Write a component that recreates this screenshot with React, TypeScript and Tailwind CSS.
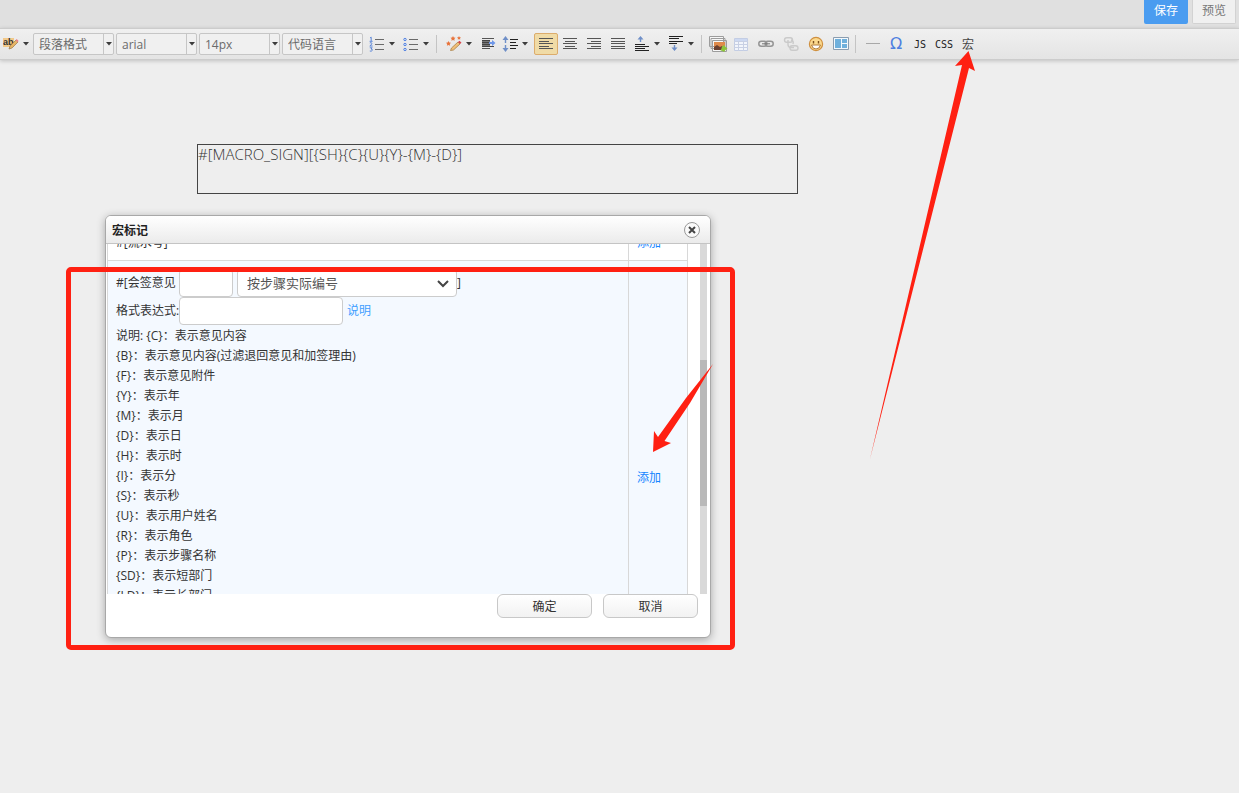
import { ReactNode, useLayoutEffect, useRef } from "react";

const BLOCK_SELECTS = [
  ["Paragraph format", "段落格式"],
  ["Font family", "arial"],
  ["Font size", "14px"],
  ["Code language", "代码语言"],
];

const MACRO_HELP = [
  "说明: {C}：表示意见内容",
  "{B}：表示意见内容(过滤退回意见和加签理由)",
  "{F}：表示意见附件",
  "{Y}：表示年",
  "{M}：表示月",
  "{D}：表示日",
  "{H}：表示时",
  "{I}：表示分",
  "{S}：表示秒",
  "{U}：表示用户姓名",
  "{R}：表示角色",
  "{P}：表示步骤名称",
  "{SD}：表示短部门",
  "{LD}：表示长部门",
];

function Lines({ d, color = "#555" }: { d: string; color?: string }) {
  return <path d={d} stroke={color} strokeWidth="1" fill="none" />;
}

function Icon({ children }: { children: ReactNode }) {
  return (
    <svg width="16" height="16" viewBox="0 0 16 16" className="shrink-0" aria-hidden="true">
      {children}
    </svg>
  );
}

function Caret() {
  return (
    <svg width="6" height="4" viewBox="0 0 6 4" aria-hidden="true">
      <path d="M0 0h6L3 3.6z" fill="#3c3c3c" />
    </svg>
  );
}

function Tool({ label, width = "w-6", active = false, children }: { label: string; width?: string; active?: boolean; children: ReactNode }) {
  return (
    <button
      title={label}
      aria-label={label}
      className={`flex h-[22px] shrink-0 items-center justify-center ${width} ${active ? "rounded-xs border border-[#dcac6c] bg-[#f0dba6]" : ""}`}
    >
      {children}
    </button>
  );
}

function SplitTool({ label, children }: { label: string; children: ReactNode }) {
  return (
    <button title={label} aria-label={label} className="flex h-[22px] w-[34px] shrink-0 items-center gap-1 pl-[3px]">
      {children}
      <Caret />
    </button>
  );
}

function Separator() {
  return <span className="mr-1.5 ml-0.5 h-[18px] w-px shrink-0 bg-[#c4c4c4]" />;
}

function ToolSelect({ label, value }: { label: string; value: string }) {
  return (
    <div className="flex h-[22px] w-[81px] shrink-0 rounded-xs border border-[#c6c6c6] bg-[#f0f0f0]">
      <select aria-label={label} className="min-w-0 flex-1 appearance-none pt-0.5 pl-[5px] text-xs text-[#6b6b6b] outline-none">
        <option>{value}</option>
      </select>
      <span className="flex w-2.5 items-center justify-center border-l border-[#c6c6c6]">
        <Caret />
      </span>
    </div>
  );
}

function Toolbar() {
  return (
    <div className="flex h-8 items-center overflow-hidden border-y border-[#cccccc] bg-linear-to-b from-[#f0f0f0] to-[#e4e4e4] shadow-[0_1px_4px_rgba(0,0,0,0.2)]">
      <SplitTool label="Format painter">
        <Icon>
          <path d="M0 2h11v9H0z" fill="#f2c98a" />
          <text x="0" y="9" fontSize="9" fontWeight="bold" fontFamily="Liberation Sans, sans-serif" fill="#333">ab</text>
          <path d="M6 13l1-3 6-6 2 2-6 6z" fill="#e6b566" stroke="#9a7748" strokeWidth=".7" />
          <path d="M12.5 4.2l1.2-1.2 2 2-1.2 1.2z" fill="#e8838b" />
        </Icon>
      </SplitTool>
      <div className="-ml-px flex gap-0.5 pr-[3px]">
        {BLOCK_SELECTS.map(([label, value]) => (
          <ToolSelect key={label} label={label} value={value} />
        ))}
      </div>
      <SplitTool label="Ordered list">
        <Icon>
          <Lines d="M6 3.5h9M6 8.5h9M6 13.5h9" color="#6a6a6a" />
          <path d="M1 2l1.200-.8V5M.6 5.300h3M.8 7c2-1.200 3.300.6 0 3h2.800M.8 11.800h2.400L2 13c2.400 0 1.600 2.800-1.200 2" stroke="#5b86d8" strokeWidth="1" fill="none" />
        </Icon>
      </SplitTool>
      <SplitTool label="Unordered list">
        <Icon>
          <Lines d="M6 3.500h9M6 8.500h9M6 13.500h9" color="#6a6a6a" />
          {[3.5, 8.5, 13.5].map((y) => (
            <circle key={y} cx="2" cy={y} r="1.200" stroke="#4f7fe0" fill="#dfe8fa" />
          ))}
        </Icon>
      </SplitTool>
      <Separator />
      <SplitTool label="Auto format">
        <Icon>
          <path d="M7 0l.8 1.600 1.700.2-1.200 1.300.3 1.700L7 4l-1.600.8.3-1.700L4.500 1.800l1.700-.2zM2.500 5l.8 1.600 1.700.2-1.200 1.300.3 1.700-1.600-.8-1.600.8.3-1.700L0 6.800l1.700-.2zM13 0l.6 1.200 1.400.2-1 1 .2 1.400-1.200-.7-1.200.7.2-1.400-1-1 1.400-.2z" fill="#e8743c" />
          <path d="M4.500 14.500l1-2.500 6.500-6 2 2-6.500 6z" fill="#f0bf78" stroke="#a98048" strokeWidth=".8" />
          <path d="M12 6l1.500-1.300 2 2L14 8z" fill="#d9444a" />
        </Icon>
      </SplitTool>
      <Tool label="Indent" width="w-[22px]">
        <Icon>
          <Lines d="M2 2.500h12M2 12.500h8" />
          <path d="M2 4h8v6H2z" fill="#777" />
          <Lines d="M2 4.500h8M2 6.500h8M2 8.500h8M2 10.500h12" color="#444" />
          <path d="M9 6h3V4l3.500 3L12 10V8H9z" fill="#6d96e8" />
        </Icon>
      </Tool>
      <SplitTool label="Line height">
        <Icon>
          <Lines d="M8 3.500h8M8 6.500h6M8 9.500h8M8 12.500h6" color="#222" />
          <path d="M3.500 0L6.500 4H4.200v3H2.800V4H.5zM3.500 16l3-4H4.200V9H2.800v3H.5z" fill="#6f8fc8" />
        </Icon>
      </SplitTool>
      <div className="flex px-px">
        <Tool label="Align left" active>
          <Icon><Lines d="M1 2.500h14M1 5.500h10M1 7.500h14M1 10.500h10M1 12.500h14" /></Icon>
        </Tool>
        <Tool label="Align center">
          <Icon><Lines d="M1 2.500h14M3 5.500h10M1 7.500h14M3 10.500h10M1 12.500h14" /></Icon>
        </Tool>
        <Tool label="Align right">
          <Icon><Lines d="M1 2.500h14M5 5.500h10M1 7.500h14M5 10.500h10M1 12.500h14" /></Icon>
        </Tool>
        <Tool label="Justify">
          <Icon><Lines d="M1 2.500h14M1 5.500h14M1 7.500h14M1 10.500h14M1 12.500h14" /></Icon>
        </Tool>
      </div>
      <SplitTool label="Space before">
        <Icon>
          <Lines d="M1 8.500h10M1 10.500h14M1 12.500h10M1 14.500h14" color="#222" />
          <path d="M6.500 0L9.500 3.500H7.200V6H5.800V3.500H3.500z" fill="#6f8fc8" />
        </Icon>
      </SplitTool>
      <SplitTool label="Space after">
        <Icon>
          <Lines d="M1 .5h14M1 2.500h10M1 5.500h14M1 7.500h8" color="#222" />
          <path d="M6.500 15l3-3.500H7.200V9H5.800v2.500H3.500z" fill="#6f8fc8" />
        </Icon>
      </SplitTool>
      <Separator />
      <Tool label="Images" width="w-5">
        <svg width="19" height="16" viewBox="0 0 19 16" className="shrink-0" aria-hidden="true">
          <path d="M.5.5h14v10H.5zM2 2.500h14v10H2zM3.500 4.500h14v11h-14z" fill="#f7f7f7" stroke="#9c9c9c" />
          <path d="M5 6h11v8H5z" fill="#e08a4a" />
          <path d="M5 11l3-2 3 2 2-1 3 2v2H5z" fill="#6b4030" />
          <path d="M15 9l1.500 2 2 1.500-2 1.500-1.500 2-1.500-1-2-.5 1-2 .5-2z" fill="#8cc43c" />
        </svg>
      </Tool>
      <Tool label="Table" width="w-[25px]">
        <Icon>
          <path d="M1.500 2.500h13v12h-13z" fill="#f2f5fb" stroke="#c3cde4" />
          <path d="M2 3h12v2H2z" fill="#cdd9f2" />
          <Lines d="M1 5.500h14M1 8.500h14M1 11.500h14M5.500 5v10M10.500 5v10" color="#c8d0e4" />
        </Icon>
      </Tool>
      <Tool label="Link" width="w-[25px]">
        <Icon>
          <rect x=".8" y="5.300" width="8" height="5" rx="2.500" fill="none" stroke="#959595" strokeWidth="1.500" />
          <rect x="7.200" y="5.300" width="8" height="5" rx="2.500" fill="none" stroke="#959595" strokeWidth="1.500" />
          <Lines d="M4 7.800h8" color="#777" />
        </Icon>
      </Tool>
      <Tool label="Unlink" width="w-[25px]">
        <Icon>
          <g fill="none" stroke="#cacaca" strokeWidth="1.400">
            <rect x="1.500" y="1.700" width="8" height="4.500" rx="2.200" />
            <rect x="7" y="9.800" width="8" height="4.500" rx="2.200" />
            <path d="M5 4v4.500q0 3 3 3h3M8 4q3 1 2 4" />
          </g>
        </Icon>
      </Tool>
      <Tool label="Emoji" width="w-[25px]">
        <Icon>
          <circle cx="8" cy="8" r="6.600" fill="#fbd98e" stroke="#cf9040" strokeWidth="1.200" />
          <path d="M5.500 5v2.500M10.500 5v2.500" stroke="#7c4f1c" strokeWidth="1.400" />
          <path d="M3.500 9h9q-1 4-4.500 4T3.500 9z" fill="#fff" stroke="#a8702c" strokeWidth=".9" />
        </Icon>
      </Tool>
      <Tool label="Template" width="w-[25px]">
        <Icon>
          <path d="M.5 1.500h15v12H.5z" fill="#f3f8fc" stroke="#8a9db0" />
          <path d="M2 3h6v9H2zM9 3h5v4H9zM9 8h5v4H9z" fill="#6fb0dc" />
        </Icon>
      </Tool>
      <Separator />
      <Tool label="Horizontal rule" width="w-[22px]">
        <Icon><Lines d="M1 7.500h14" color="#a8a8a8" /></Icon>
      </Tool>
      <Tool label="Special characters">
        <span className="font-['DejaVu_Sans',sans-serif] text-base leading-4 text-[#4f7fe0]">Ω</span>
      </Tool>
      <Tool label="JS">
        <span className="font-['DejaVu_Sans_Mono',monospace] text-[10px] text-[#222]">JS</span>
      </Tool>
      <Tool label="CSS">
        <span className="font-['DejaVu_Sans_Mono',monospace] text-[10px] text-[#222]">CSS</span>
      </Tool>
      <Tool label="宏">
        <span className="pt-0.5 text-xs text-[#444]">宏</span>
      </Tool>
    </div>
  );
}

function MacroDialog() {
  const scroller = useRef<HTMLDivElement>(null);

  useLayoutEffect(() => {
    if (scroller.current) scroller.current.scrollTop = 20;
  }, []);

  return (
    <section
      role="dialog"
      aria-label="宏标记"
      className="absolute top-[215px] left-[105px] w-[606px] overflow-hidden rounded-md border border-[#a8a8a8] bg-white text-xs text-[#333] shadow-[0_2px_8px_rgba(0,0,0,0.3)]"
    >
      <header className="flex h-7 items-center justify-between border-b border-[#c4c4c4] bg-linear-to-b from-white to-[#ebebeb] pr-2.5 pl-1.5">
        <h2 className="pt-0.5 font-bold text-[#222]">宏标记</h2>
        <button aria-label="Close" className="flex size-4 items-center justify-center rounded-full border border-[#999] bg-[#fafafa]">
          <svg width="8" height="8" viewBox="0 0 8 8" aria-hidden="true">
            <path d="M1 1l6 6M7 1L1 7" stroke="#444" strokeWidth="2" />
          </svg>
        </button>
      </header>
      <div className="flex h-[350px] pr-[3px] pl-px">
        <div ref={scroller} className="mr-3 flex-1 overflow-hidden">
          <table className="w-full border-separate border-spacing-0">
            <tbody>
              <tr>
                <td className="h-[37px] border-x border-b border-[#d8d8d8] px-2 pt-0.5">#[流水号]</td>
                <td className="w-[59px] border-r border-b border-[#d8d8d8] px-2 pt-0.5">
                  <a href="#add-serial" className="text-[#1585ff]">添加</a>
                </td>
              </tr>
              <tr className="bg-[#f4f9ff]">
                <td className="h-[434px] border-x border-[#d8d8d8] px-2 py-2 align-top">
                  <div className="flex h-7 items-center">
                    <label htmlFor="macro-step" className="w-[63px] whitespace-nowrap">#[会签意见</label>
                    <input id="macro-step" className="h-7 w-[54px] rounded-sm border border-[#ccc] bg-white px-2" />
                    <span className="relative ml-1 flex">
                      <select aria-label="编号方式" className="h-7 w-[220px] appearance-none rounded-sm border border-[#ccc] bg-white pt-0.5 pl-[9px] text-[13px] text-[#555]">
                        <option>按步骤实际编号</option>
                      </select>
                      <svg width="12" height="8" viewBox="0 0 12 8" className="pointer-events-none absolute top-[11px] right-2" aria-hidden="true">
                        <path d="M1 1l5 5 5-5" fill="none" stroke="#444" strokeWidth="2" />
                      </svg>
                    </span>
                    <span>]</span>
                  </div>
                  <div className="flex h-7 items-center">
                    <label htmlFor="macro-format" className="w-[63px] whitespace-nowrap">格式表达式:</label>
                    <input id="macro-format" className="h-7 w-[164px] rounded-sm border border-[#ccc] bg-white px-2" />
                    <a href="#format-help" className="ml-1 text-[#409eff]">说明</a>
                  </div>
                  <div className="pt-px">
                    {MACRO_HELP.map((line) => (
                      <p key={line} className="leading-5">{line}</p>
                    ))}
                  </div>
                </td>
                <td className="border-r border-[#d8d8d8] px-2 align-middle">
                  <a href="#add-sign" className="text-[#1585ff]">添加</a>
                </td>
              </tr>
            </tbody>
          </table>
        </div>
        <div className="w-[7px] bg-[#d9d9d9] pt-[116px]">
          <div className="h-[146px] bg-[#b9b9b9]" />
        </div>
      </div>
      <footer className="flex justify-end gap-[11px] pr-3 pb-[19px]">
        {["确定", "取消"].map((label) => (
          <button key={label} className="h-6 w-[95px] rounded-md border border-[#c8c8c8] bg-linear-to-b from-white to-[#f2f2f2] pt-0.5">
            {label}
          </button>
        ))}
      </footer>
    </section>
  );
}

// Hand-drawn callouts that sit above the whole editor
function Annotations() {
  return (
    <>
      <div className="pointer-events-none absolute top-[267px] left-[66px] h-[383px] w-[669px] rounded-[5px] border-[5px] border-[#ff2012]" />
      <svg width="63" height="90" viewBox="0 0 63 90" className="pointer-events-none absolute top-[363px] left-[652px]" aria-hidden="true">
        <path d="M61 1L34 35 6 74 2 68 1 89 19 80 12.500 78 38 40z" fill="#ff2012" />
      </svg>
      <svg width="112" height="410" viewBox="0 0 112 410" className="pointer-events-none absolute top-[51px] left-[868px]" aria-hidden="true">
        <path d="M2 408L94 14 87 15 100.500 0 107 20 101 17z" fill="#ff2012" />
      </svg>
    </>
  );
}

export default function App() {
  return (
    <div className="relative min-h-screen overflow-hidden bg-[#eeeeee] font-['Open_Sans','Noto_Sans_CJK_SC',sans-serif]">
      <div className="flex h-7 items-start justify-end gap-1 bg-[#e0e0e0] pr-[3px]">
        <button className="h-6 w-11 rounded-b-xs bg-[#4a9cf0] pb-0.5 text-xs text-white">保存</button>
        <button className="h-6 w-11 rounded-b-xs border border-t-0 border-[#d2d2d2] bg-[#f0f0f0] pb-0.5 text-xs text-[#777]">预览</button>
      </div>
      <Toolbar />
      <main className="pt-[84px] pl-[197px]">
        <div className="h-[50px] w-[601px] border border-[#444] text-[15px] leading-[18px] font-light text-[#333]">
          #[MACRO_SIGN][{"{SH}{C}{U}{Y}-{M}-{D}"}]
        </div>
      </main>
      <MacroDialog />
      <Annotations />
    </div>
  );
}
